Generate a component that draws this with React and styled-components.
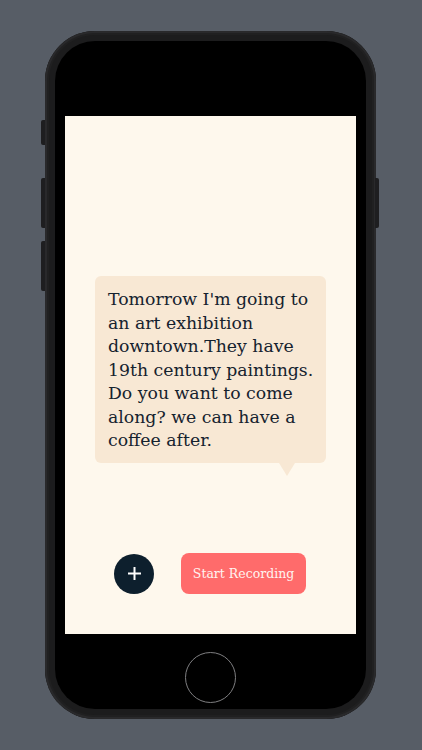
import React from "react";
import styled, { createGlobalStyle } from "styled-components";

const Global = createGlobalStyle`
  html, body { margin: 0; padding: 0; }
  body { background: #575d66; font-family: "DejaVu Serif", serif; }
`;

const Page = styled.div`
  width: 422px;
  height: 750px;
  box-sizing: border-box;
  padding: 31px 0 0 45px;
  background: #575d66;
`;

const Phone = styled.div`
  position: relative;
  width: 331px;
  height: 688px;
  box-sizing: border-box;
  padding: 10px;
  border-radius: 50px;
  background: #1c1c1d;
  box-shadow: inset 0 0 0 2px #29292b, inset 0 0 0 4px #202021;
`;

const SideButton = styled.div`
  position: absolute;
  width: 4px;
  top: ${(p) => p.top}px;
  height: ${(p) => p.h}px;
  ${(p) => (p.right ? "right: -3px;" : "left: -4px;")}
  background: #1e1e20;
  border-radius: ${(p) => (p.right ? "0 2px 2px 0" : "2px 0 0 2px")};
`;

const Bezel = styled.div`
  height: 100%;
  box-sizing: border-box;
  background: #000;
  border-radius: 40px;
  padding: 75px 10px 0;
  display: flex;
  flex-direction: column;
  align-items: stretch;
`;

const Screen = styled.div`
  height: 518px;
  background: #fef8ed;
  display: flex;
  flex-direction: column;
  padding-top: 160px;
  box-sizing: border-box;
`;

const Bubble = styled.div`
  position: relative;
  width: 231px;
  box-sizing: border-box;
  margin-left: 30px;
  padding: 12px 8px 10px 13px;
  background: #f8e8d4;
  border-radius: 6px;
  color: #15222e;
  font-family: "DejaVu Serif", serif;
  font-size: 17.3px;
  line-height: 23.5px;
  &::after {
    content: "";
    position: absolute;
    right: 31px;
    bottom: -13px;
    border-left: 8px solid transparent;
    border-right: 8px solid transparent;
    border-top: 13px solid #f8e8d4;
  }
`;

const Actions = styled.div`
  margin-top: auto;
  padding: 0 0 40px 49px;
  display: flex;
  align-items: center;
  gap: 27px;
`;

const PlusButton = styled.button`
  width: 40px;
  height: 40px;
  border-radius: 50%;
  border: none;
  padding: 0;
  background: #0d1f2d;
  display: flex;
  align-items: center;
  justify-content: center;
`;

const RecordButton = styled.button`
  width: 125px;
  height: 41px;
  border: none;
  border-radius: 8px;
  background: #ff6b6b;
  color: #fff3f0;
  font-family: "DejaVu Serif", serif;
  font-size: 12.5px;
  padding: 0;
`;

const HomeArea = styled.div`
  display: flex;
  justify-content: center;
  padding-top: 18px;
`;

const HomeButton = styled.div`
  width: 49px;
  height: 49px;
  border-radius: 50%;
  border: 1.5px solid #7f7f81;
`;

export default function App() {
  return (
    <>
      <Global />
      <Page>
        <Phone>
          <SideButton top={89} h={25} />
          <SideButton top={147} h={50} />
          <SideButton top={210} h={50} />
          <SideButton right top={147} h={50} />
          <Bezel>
            <Screen>
              <Bubble>
                Tomorrow I'm going to an art exhibition downtown.They have 19th
                century paintings. Do you want to come along? we can have a
                coffee after.
              </Bubble>
              <Actions>
                <PlusButton aria-label="Add">
                  <svg width="13" height="13" viewBox="0 0 13 13">
                    <path
                      d="M6.5 0.5v12M0.5 6.5h12"
                      stroke="#fff"
                      strokeWidth="2"
                      strokeLinecap="round"
                    />
                  </svg>
                </PlusButton>
                <RecordButton>Start Recording</RecordButton>
              </Actions>
            </Screen>
            <HomeArea>
              <HomeButton />
            </HomeArea>
          </Bezel>
        </Phone>
      </Page>
    </>
  );
}
